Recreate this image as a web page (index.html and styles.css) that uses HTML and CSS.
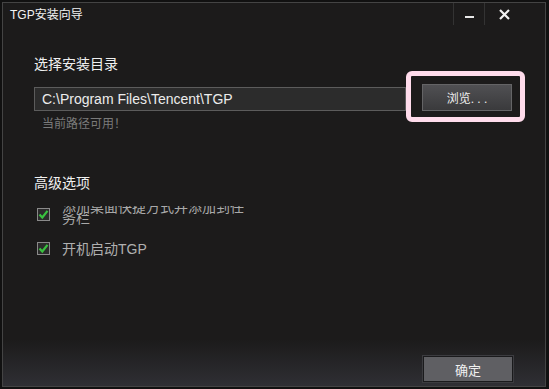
FILE: index.html
```html
<!DOCTYPE html>
<html lang="zh-CN">
<head>
    <meta charset="UTF-8">
    <title>TGP安装向导</title>
    <link rel="stylesheet" href="styles.css">
</head>
<body>
    <div class="window">
        <div class="titlebar">
            <div class="title">TGP安装向导</div>
            <div class="controls">
                <div class="ctrl ctrl-min"><span class="min-bar"></span></div>
                <div class="ctrl ctrl-close">
                    <svg width="11" height="11" viewBox="0 0 11 11">
                        <path d="M1 1 L10 10 M10 1 L1 10" stroke="#f2f2f2" stroke-width="2.2" fill="none"/>
                    </svg>
                </div>
            </div>
        </div>

        <div class="content">
            <div class="section-title">选择安装目录</div>
            <div class="path-row">
                <div class="path-col">
                    <div class="path-input">C:\Program Files\Tencent\TGP</div>
                    <div class="hint">当前路径可用！</div>
                </div>
                <div class="highlight">
                    <button class="btn btn-browse">浏览. . .</button>
                </div>
            </div>

            <div class="section-title advanced">高级选项</div>
            <div class="option option-clipped">
                <span class="checkbox">
                    <svg width="11" height="11" viewBox="0 0 11 11">
                        <path d="M1.5 5.5 L4.3 8.5 L9.5 1.8" stroke="#39c23f" stroke-width="2.2" fill="none"/>
                    </svg>
                </span>
                <div class="option-text">
                    <div class="clip clip-1"><span>添加桌面快捷方式并添加到任</span></div>
                    <div class="clip clip-2"><span>务栏</span></div>
                </div>
            </div>
            <div class="option">
                <span class="checkbox">
                    <svg width="11" height="11" viewBox="0 0 11 11">
                        <path d="M1.5 5.5 L4.3 8.5 L9.5 1.8" stroke="#39c23f" stroke-width="2.2" fill="none"/>
                    </svg>
                </span>
                <span class="option-label">开机启动TGP</span>
            </div>
        </div>

        <div class="footer">
            <button class="btn btn-ok">确定</button>
        </div>
    </div>
</body>
</html>
```

FILE: styles.css
```css
body {
    margin: 0;
    background: #111;
    font-family: "Liberation Sans", "Noto Sans CJK SC", sans-serif;
}
.window {
    box-sizing: border-box;
    width: 544px;
    height: 385px;
    margin: 2px 3px 2px 2px;
    border: 1px solid #444;
    background: #1c1b1b;
    display: flex;
    flex-direction: column;
}
.titlebar {
    height: 27px;
    display: flex;
    justify-content: space-between;
}
.title {
    color: #f2f2f2;
    font-size: 12px;
    line-height: 12px;
    padding: 6px 0 0 7px;
}
.controls {
    display: flex;
    height: 22px;
}
.ctrl {
    border-left: 1px solid #333;
    display: flex;
}
.ctrl-min {
    width: 30px;
    justify-content: center;
}
.min-bar {
    width: 9px;
    height: 2px;
    margin-top: 13px;
    background: #e8e8e8;
}
.ctrl-close {
    width: 61px;
    padding: 6px 0 0 14px;
    box-sizing: border-box;
}
.content {
    flex: 1;
    padding: 24px 0 0 31px;
}
.section-title {
    color: #f0f0f0;
    font-size: 14px;
    line-height: 20px;
}
.section-title.advanced {
    margin-top: 41px;
}
.path-row {
    display: flex;
    margin-top: -3px;
}
.path-col {
    margin-top: 16px;
}
.path-input {
    box-sizing: border-box;
    width: 372px;
    height: 24px;
    border: 1px solid #5c5c5c;
    background: #2c2c2c;
    color: #ececec;
    font-size: 14px;
    line-height: 22px;
    padding-left: 7px;
}
.hint {
    margin-top: 5px;
    padding-left: 8px;
    color: #7a7a7a;
    font-size: 12px;
    line-height: 16px;
}
.highlight {
    box-sizing: border-box;
    width: 119px;
    height: 51px;
    border: 5px solid #ffdcec;
    border-radius: 6px;
    padding: 8px 0 0 11px;
}
.btn {
    font-family: inherit;
    color: #f0f0f0;
    cursor: pointer;
    padding: 0;
}
.btn-browse {
    width: 90px;
    height: 27px;
    font-size: 12px;
    border: 1px solid #646466;
    background: linear-gradient(#505053, #3a3a3c);
}
.option {
    display: flex;
    align-items: flex-start;
    margin-top: 15px;
}
.option-clipped {
    margin-top: 13px;
}
.checkbox {
    box-sizing: border-box;
    width: 13px;
    height: 13px;
    margin: 2px 12px 0 3px;
    border: 1px solid #8a8a8a;
    background: #2b2b2b;
    display: flex;
    align-items: center;
    justify-content: center;
}
.option-text {
    color: #a9a9a9;
    font-size: 14px;
}
.clip {
    overflow: hidden;
    display: flex;
    align-items: flex-end;
    line-height: 14px;
}
.clip span {
    white-space: nowrap;
}
.clip-1 {
    height: 8px;
}
.clip-2 {
    height: 11px;
}
.option-label {
    color: #b0b0b0;
    font-size: 14px;
    line-height: 18px;
}
.footer {
    height: 46px;
    display: flex;
    justify-content: flex-end;
    align-items: flex-start;
    padding: 2px 32px 0 0;
    box-sizing: border-box;
    background: linear-gradient(#1c1b1b, #2f2f34);
}
.btn-ok {
    width: 90px;
    height: 26px;
    margin-top: 14px;
    font-size: 13px;
    border: 1px solid #1a1a1c;
    outline: 1px solid #3c3c40;
    background: #5f5f63;
}
```
